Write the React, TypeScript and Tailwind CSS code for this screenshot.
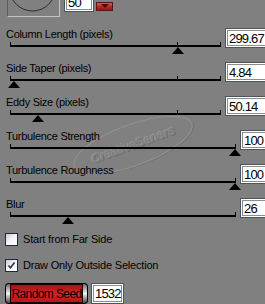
import React from "react";

type RowProps = {
  label: string;
  value: string;
  thumb: number;
  long?: boolean;
};

const Thumb = ({ left }: { left: number }) => (
  <svg
    className="absolute top-[5px]"
    style={{ left }}
    width="12"
    height="7"
    viewBox="0 0 12 7"
  >
    <polygon points="6,0 12,7 0,7" fill="#000" />
  </svg>
);

const NumBox = ({ value, w, h = 20 }: { value: string; w: number; h?: number }) => (
  <div
    className="shrink-0 border border-[#4a5561] bg-white p-[1px]"
    style={{ width: w, height: h }}
  >
    <div className="flex h-full items-center whitespace-nowrap border border-[#8c8c8c] bg-white pl-[1px] text-[13px] leading-none tracking-[-0.8px] text-black">
      {value}
    </div>
  </div>
);

const SliderRow = ({ label, value, thumb, long }: RowProps) => (
  <div className="flex h-[34px]">
    <div className={long ? "flex w-[240px] shrink-0 flex-col" : "flex w-[225px] shrink-0 flex-col"}>
      <div className="whitespace-nowrap pl-[6px] text-[11px] leading-[13px] tracking-[-0.3px] text-black">{label}</div>
      <div className={long ? "relative ml-[10px] mt-[1px] h-[12px] w-[226px]" : "relative ml-[10px] mt-[1px] h-[12px] w-[211px]"}>
        <div className="absolute left-0 top-0 h-[5px] w-[1px] bg-black" />
        <div className="absolute right-0 top-0 h-[5px] w-[1px] bg-black" />
        {!long && <div className="absolute left-[167px] top-0 h-[5px] w-[1px] bg-black" />}
        <div className="absolute left-0 right-0 top-[3px] h-[2px] bg-black" />
        <Thumb left={thumb} />
      </div>
    </div>
    <NumBox value={value} w={48} />
  </div>
);

const CheckBox = ({ checked, label }: { checked?: boolean; label: string }) => (
  <div className="flex h-[13px] items-center">
    <div className="ml-[5px] flex h-[13px] w-[13px] items-center justify-center border border-[#1f2a38] bg-linear-to-br from-[#c9c9d2] via-[#f4f4f8] to-white">
      {checked && (
        <svg width="9" height="9" viewBox="0 0 9 9">
          <path d="M1.5 4.5 L3.5 6.8 L7.5 1.5" stroke="#2a3444" strokeWidth="1.6" fill="none" />
        </svg>
      )}
    </div>
    <div className="ml-[5px] whitespace-nowrap text-[11px] leading-[13px] tracking-[-0.2px] text-black">{label}</div>
  </div>
);

export default function App() {
  return (
    <div className="relative h-[304px] w-[265px] overflow-hidden bg-[#808080] font-['Liberation_Sans',Arial,sans-serif]">
      {/* top row */}
      <div className="-mt-[8px] flex h-[25px] items-start">
        <div className="relative ml-[7px] h-[25px] w-[53px] overflow-hidden border-b border-l border-r border-b-[#c4c4c4] border-l-[#5c5c5c] border-r-[#c4c4c4]">
          <svg className="absolute left-0 top-0" width="51" height="24" viewBox="0 0 51 24">
            <circle cx="24.5" cy="-3.8" r="22.8" stroke="#2c2c2c" strokeWidth="1" fill="none" />
          </svg>
        </div>
        <div className="ml-[4px]">
          <NumBox value="50" w={30} h={20} />
        </div>
        <div className="ml-[2px] mt-[10px] flex h-[9px] w-[17px] items-center justify-center border border-[#5a1414] bg-linear-to-b from-[#d45a5a] via-[#b82a2a] to-[#8c1818]">
          <svg width="8" height="5" viewBox="0 0 8 5">
            <polygon points="0,0 8,0 4,4" fill="#4a0a0a" />
          </svg>
        </div>
      </div>

      {/* watermark */}
      <div className="pointer-events-none absolute left-[70px] top-[124px] flex h-[42px] w-[126px] -rotate-[20deg] items-center justify-center rounded-[50%] border border-[#929292] shadow-[1px_1px_0_#737373]">
        <span className="text-[13px] font-bold italic tracking-[-0.5px] text-[#828282] [text-shadow:-1px_-1px_0_#959595,1px_1px_0_#6e6e6e]">
          CreativeSeners
        </span>
      </div>

      {/* sliders */}
      <div className="relative mt-[11px] flex flex-col">
        <SliderRow label="Column Length (pixels)" value="299.67" thumb={162} />
        <SliderRow label="Side Taper (pixels)" value="4.84" thumb={-2} />
        <SliderRow label="Eddy Size (pixels)" value="50.14" thumb={22} />
        <SliderRow label="Turbulence Strength" value="100" thumb={219} long />
        <SliderRow label="Turbulence Roughness" value="100" thumb={219} long />
        <SliderRow label="Blur" value="26" thumb={52} long />
      </div>

      {/* checkboxes */}
      <div className="mt-[1px]">
        <CheckBox label="Start from Far Side" />
      </div>
      <div className="mt-[13px]">
        <CheckBox checked label="Draw Only Outside Selection" />
      </div>

      {/* random seed */}
      <div className="mt-[11px] flex items-start">
        <div className="ml-[5px] flex h-[21px] w-[83px] rounded-[4px] bg-black p-[1px]">
          <div className="w-[4px] rounded-l-[3px] bg-linear-to-b from-[#6a6a6a] via-[#f4f4f4] to-[#4a4a4a]" />
          <div className="flex flex-1 items-center justify-center whitespace-nowrap border border-[#1a0000] bg-linear-to-b from-[#a01414] via-[#d42424] to-[#b01a1a] text-[12px] leading-none tracking-[-0.6px] text-black">
            Random Seed
          </div>
          <div className="w-[4px] rounded-r-[3px] bg-linear-to-b from-[#6a6a6a] via-[#f4f4f4] to-[#4a4a4a]" />
        </div>
        <div className="ml-[3px]">
          <NumBox value="1532" w={33} h={21} />
        </div>
      </div>
    </div>
  );
}
